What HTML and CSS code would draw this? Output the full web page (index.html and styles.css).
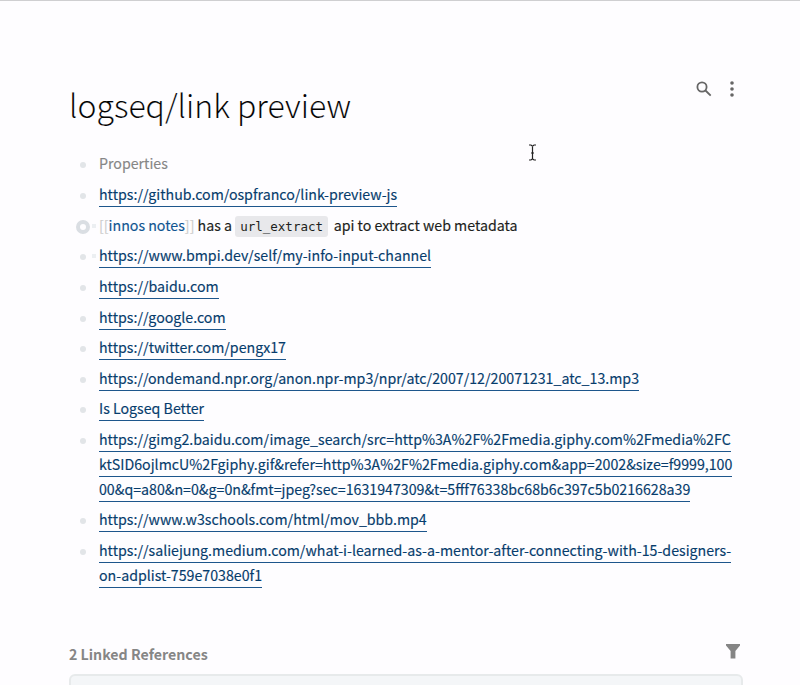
FILE: index.html
```html
<!DOCTYPE html>
<html lang="en">
<head>
<meta charset="utf-8">
<title>logseq/link preview</title>
<link rel="stylesheet" href="styles.css">
</head>
<body>
<main class="page">
  <header class="head">
    <h1 class="title">logseq/link preview</h1>
    <div class="actions">
      <svg class="search" viewBox="0 0 16 16"><circle cx="6" cy="6" r="4.6"/><path d="M9.5 9.5 14.7 14.7"/></svg>
      <svg class="dots" viewBox="0 0 4 16"><circle cx="2" cy="2" r="1.8"/><circle cx="2" cy="8" r="1.8"/><circle cx="2" cy="14" r="1.8"/></svg>
    </div>
  </header>
  <ul class="blocks">
    <li class="block"><span class="muted">Properties</span></li>
    <li class="block"><a class="link">https://github.com/ospfranco/link-preview-js</a></li>
    <li class="block collapsed"><span class="bracket">[[</span><a class="ref">innos notes</a><span class="bracket">]]</span> has a <code class="code">url_extract</code> api to extract web metadata</li>
    <li class="block tick"><a class="link">https://www.bmpi.dev/self/my-info-input-channel</a></li>
    <li class="block"><a class="link">https://baidu.com</a></li>
    <li class="block"><a class="link">https://google.com</a></li>
    <li class="block"><a class="link">https://twitter.com/pengx17</a></li>
    <li class="block"><a class="link">https://ondemand.npr.org/anon.npr-mp3/npr/atc/2007/12/20071231_atc_13.mp3</a></li>
    <li class="block"><a class="link">Is Logseq Better</a></li>
    <li class="block"><a class="link">https://gimg2.baidu.com/image_search/src=http%3A%2F%2Fmedia.giphy.com%2Fmedia%2FC<br>ktSID6ojlmcU%2Fgiphy.gif&amp;refer=http%3A%2F%2Fmedia.giphy.com&amp;app=2002&amp;size=f9999,100<br>00&amp;q=a80&amp;n=0&amp;g=0n&amp;fmt=jpeg?sec=1631947309&amp;t=5fff76338bc68b6c397c5b0216628a39</a></li>
    <li class="block"><a class="link">https://www.w3schools.com/html/mov_bbb.mp4</a></li>
    <li class="block"><a class="link">https://saliejung.medium.com/what-i-learned-as-a-mentor-after-connecting-with-15-designers-<br>on-adplist-759e7038e0f1</a></li>
  </ul>
  <section class="references">
    <div class="refhead">
      <h2 class="subtitle">2 Linked References</h2>
      <svg class="filter" viewBox="0 0 14 15"><path d="M0 0H14V1.6L9.4 7V14.5H4.6V7L0 1.6Z"/></svg>
    </div>
    <div class="card"></div>
  </section>
</main>
<svg class="cursor" viewBox="0 0 9 17"><path d="M1 1H3L4.5 2.2 6 1H8M4.5 2V15M1 16H3L4.5 14.8 6 16H8M3 9H6"/></svg>
</body>
</html>
```

FILE: styles.css
```css
*, *::before, *::after { box-sizing: border-box; }
body {
  margin: 0;
  height: 685px;
  overflow: hidden;
  border-top: 1px solid #cfcfd1;
  background: #fefdff;
  color: #1c1e20;
  font-family: "Noto Sans CJK SC", "Noto Sans", sans-serif;
  font-size: 14.2px;
  line-height: 24.8px;
}
.page { width: 674px; margin-left: 69px; padding-top: 79px; }
.head { display: flex; justify-content: space-between; height: 68.3px; }
.title { margin: 0; font-size: 32px; font-weight: 300; line-height: 48px; color: #000; -webkit-text-stroke: 0.12px #fefdff; }
.actions { display: flex; gap: 18px; padding: 1px 9.5px 0 0; }
.search { width: 16px; height: 16px; fill: none; stroke: #666; stroke-width: 1.8; }
.dots { width: 4px; height: 16px; fill: #666; }
.blocks { list-style: none; margin: 0; padding: 0; -webkit-text-stroke: 0.15px currentColor; }
.block { position: relative; padding: 3px 0 2.85px 30px; white-space: nowrap; }
.block::before {
  content: ""; position: absolute; left: 11px; top: 14px;
  width: 6px; height: 6px; border-radius: 50%; background: #e2e5e8;
}
.collapsed { height: 30.7px; }
.collapsed::before { left: 7px; top: 10px; width: 14px; height: 14px; border: 4px solid #dadee3; background: #fefdff; }
.tick::after, .collapsed::after { content: ""; position: absolute; left: 23px; top: 14px; width: 4px; height: 4px; background: #eceff2; }
.muted { color: #868686; }
.link { color: #063c6c; border-bottom: 1px solid #1d568c; padding-bottom: 2px; }
.ref { color: #115591; }
.bracket { color: #ccc; }
.code { font-family: "DejaVu Sans Mono", monospace; font-size: 12.5px; line-height: 1; background: #e8e8eb; padding: 3px 5px; margin-right: 2.5px; border-radius: 3px; -webkit-text-stroke: 0; }
.references { margin-top: 51.3px; }
.refhead { display: flex; justify-content: space-between; height: 32px; }
.subtitle { margin: 0; font-size: 14.2px; font-weight: 700; line-height: 25px; color: #868686; }
.filter { width: 14px; height: 15px; margin: 2px 3px 0 0; fill: #858585; }
.card { height: 40px; border: 2px solid #e7eaeb; border-radius: 6px; background: #f4f6f8; }
.cursor { position: absolute; left: 527.5px; top: 144px; width: 9px; height: 17px; fill: none; stroke: #222; stroke-width: 1.2; }
```
